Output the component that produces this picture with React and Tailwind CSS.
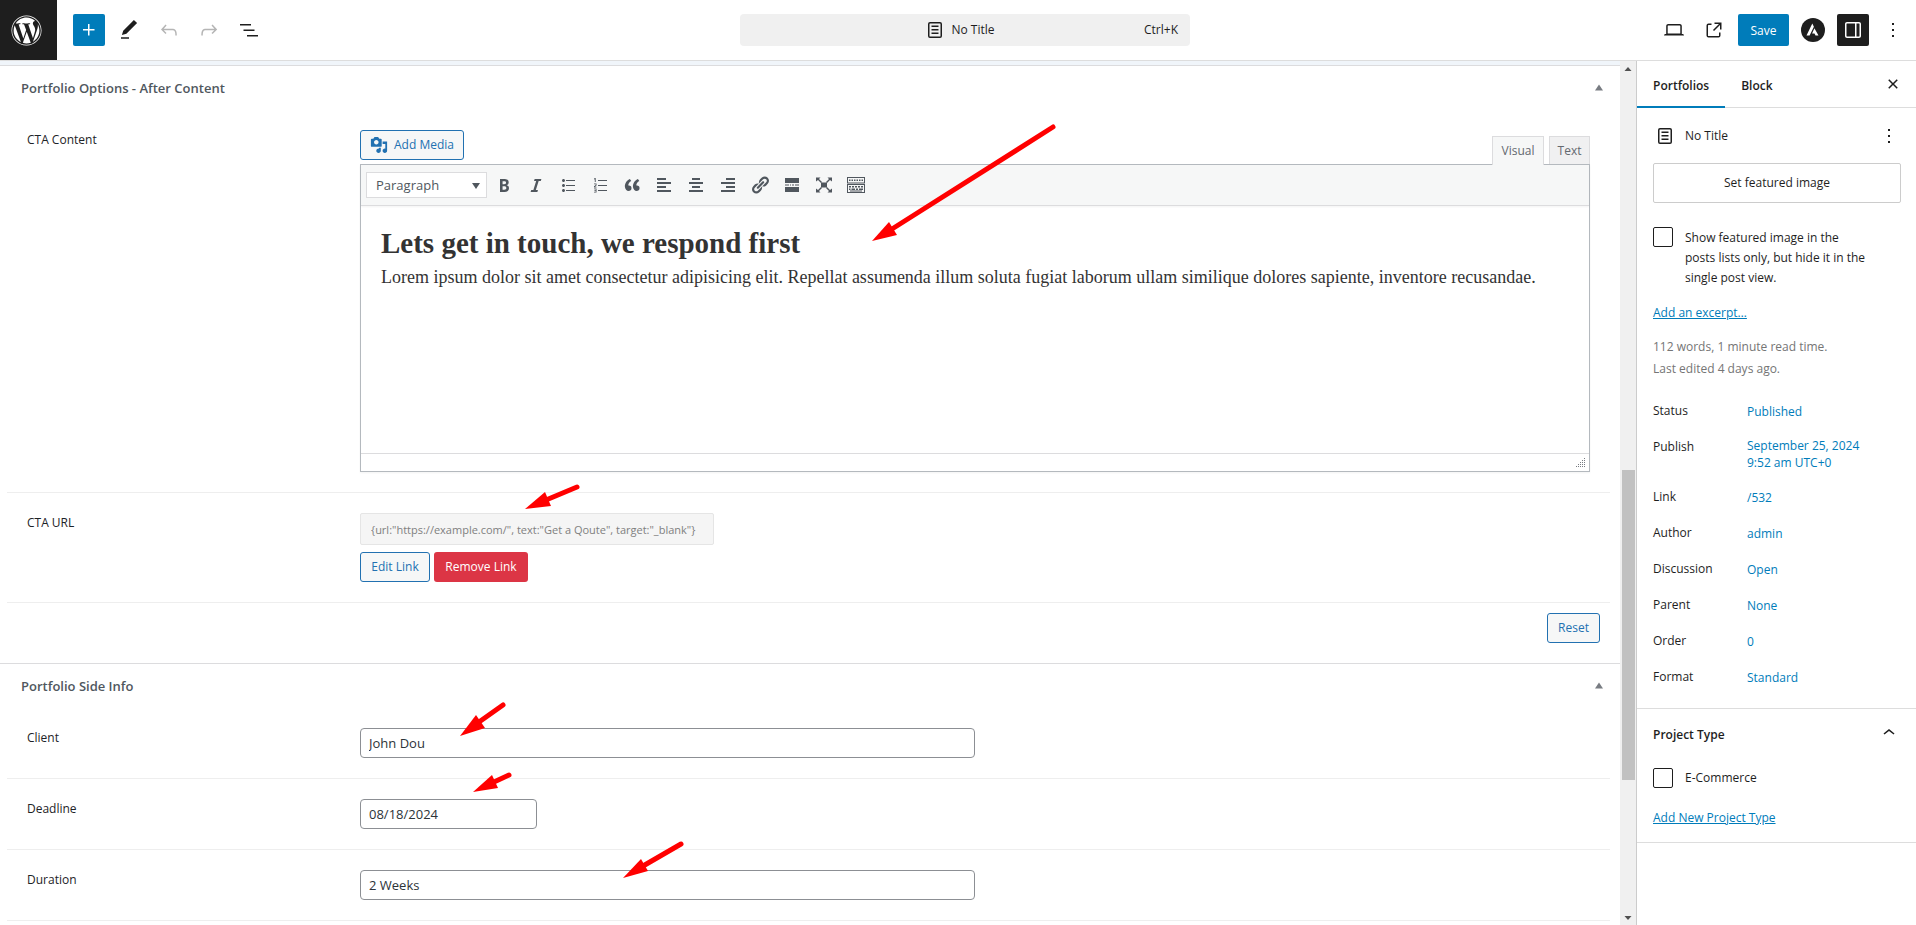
import React from "react";
import { FaWordpress } from "react-icons/fa";

function Glyph({ d, size = "size-6", box = "0 0 24 24", className = "" }) {
  return (
    <svg viewBox={box} className={`${size} shrink-0 ${className}`} fill="currentColor" aria-hidden="true">
      <path d={d} fillRule="evenodd" />
    </svg>
  );
}

const WP = {
  plus: "M11 12.5V17.5H12.5V12.5H17.5V11H12.5V6H11V11H6V12.5H11Z",
  edit: "M20.1 5.1L16.9 2 6.2 12.7l-1.3 4.4 4.5-1.3L20.1 5.1zM4 20.8h8v-1.5H4v1.5z",
  undo: "M18.3 11.7c-.6-.6-1.4-.9-2.3-.9H6.7l2.9-3.3-1.1-1-4.5 5L8.5 16l1-1-2.7-2.7H16c.5 0 .9.2 1.3.5 1 1 1 3.4 1 4.5v.3h1.5v-.2c0-1.5 0-4.3-1.5-5.7z",
  redo: "M15.6 6.5l-1.1 1 2.9 3.3H8c-.9 0-1.7.3-2.3.9-1.4 1.5-1.4 4.2-1.4 5.6v.2h1.5v-.3c0-1.1 0-3.5 1-4.5.3-.3.7-.5 1.3-.5h9.2L14.5 15l1.1 1.1 4.6-4.6-4.6-5z",
  list: "M3 6h11v1.5H3V6Zm3.5 5.5h11V13h-11v-1.5ZM21 17H10v1.5h11V17Z",
  page: "M15.5 7.5h-7V9h7V7.5Zm-7 3.5h7v1.5h-7V11Zm7 3.5h-7V16h7v-1.5ZM17 4H7a2 2 0 0 0-2 2v12a2 2 0 0 0 2 2h10a2 2 0 0 0 2-2V6a2 2 0 0 0-2-2ZM7 5.5h10a.5.5 0 0 1 .5.5v12a.5.5 0 0 1-.5.5H7a.5.5 0 0 1-.5-.5V6a.5.5 0 0 1 .5-.5Z",
  laptop: "M20.5 16h-.7V8c0-1.1-.9-2-2-2H6.2c-1.1 0-2 .9-2 2v8h-.7c-.8 0-1.5.7-1.5 1.5h20c0-.8-.7-1.5-1.5-1.5zM5.7 8c0-.3.2-.5.5-.5h11.6c.3 0 .5.2.5.5v7.6H5.7V8z",
  external: "M19.5 4.5h-7V6h4.44l-5.97 5.97 1.06 1.06L18 7.06v4.44h1.5v-7Zm-13 1a2 2 0 0 0-2 2v10a2 2 0 0 0 2 2h10a2 2 0 0 0 2-2v-3H17v3a.5.5 0 0 1-.5.5h-10a.5.5 0 0 1-.5-.5v-10a.5.5 0 0 1 .5-.5h3V5.5h-3Z",
  drawer: "M18 4H6c-1.1 0-2 .9-2 2v12c0 1.1.9 2 2 2h12c1.1 0 2-.9 2-2V6c0-1.1-.9-2-2-2zm-4 14.5H6c-.3 0-.5-.2-.5-.5V6c0-.3.2-.5.5-.5h8v13zm4.5-.5c0 .3-.2.5-.5.5h-2.5v-13H18c.3 0 .5.2.5.5v12z",
  more: "M13 19h-2v-2h2v2zm0-6h-2v-2h2v2zm0-6h-2V5h2v2z",
  close: "M12 13.06l3.712 3.713 1.061-1.06L13.061 12l3.712-3.712-1.06-1.06L12 10.938 8.288 7.227l-1.061 1.06L10.939 12l-3.712 3.712 1.06 1.061L12 13.061z",
  up: "M6.5 12.4L12 8l5.5 4.4-.9 1.2L12 10l-4.5 3.6-1-1.2z",
};

const TOOLS = [
  ["Bold", "M6 4v13h4.54c1.37 0 2.46-.33 3.26-1 .8-.66 1.2-1.58 1.2-2.77 0-.84-.17-1.51-.51-2.01s-.9-.85-1.67-1.03v-.09c.57-.1 1.02-.4 1.36-.9s.51-1.13.51-1.91c0-1.14-.39-1.98-1.17-2.5C12.75 4.26 11.5 4 9.78 4H6zm2.57 5.15V6.26h1.36c.73 0 1.27.11 1.61.32.34.22.51.58.51 1.07 0 .54-.16.92-.47 1.15s-.82.35-1.51.35h-1.5zm0 2.19h1.6c1.44 0 2.16.53 2.16 1.61 0 .6-.17 1.05-.51 1.34s-.86.43-1.57.43H8.57v-3.38z"],
  ["Italic", "M14.78 6h-2.13l-2.8 9h2.12l-.62 2H4.6l.62-2h2.14l2.8-9H8.03l.62-2h6.75z"],
  ["Bulleted list", "M5.5 7C4.67 7 4 6.33 4 5.5 4 4.68 4.67 4 5.5 4 6.32 4 7 4.68 7 5.5 7 6.33 6.32 7 5.5 7zM8 5h9v1H8V5zm-2.5 7c-.83 0-1.5-.67-1.5-1.5C4 9.68 4.67 9 5.5 9c.82 0 1.5.68 1.5 1.5 0 .83-.68 1.5-1.5 1.5zM8 10h9v1H8v-1zm-2.5 7c-.83 0-1.5-.67-1.5-1.5 0-.82.67-1.5 1.5-1.5.82 0 1.5.68 1.5 1.5 0 .83-.68 1.5-1.5 1.5zM8 15h9v1H8v-1z"],
  ["Numbered list", "M8 5h9v1H8zM8 10h9v1H8zM8 15h9v1H8zM4.8 3h.9v4h-.9V4.200l-.8.3v-.8zM4 8.500h2.500v2L5 11.700h1.500v.8H4v-1.200l1.700-1.300v-.7H4zM4 13.500h2.500v4H4v-.8h1.700v-.9H4.400v-.7h1.300v-.8H4z"],
  ["Blockquote", "M9.49 13.22c0-.74-.2-1.38-.61-1.9-.62-.78-1.83-.88-2.53-.72-.29-1.65 1.11-3.75 2.92-4.65L7.88 4c-2.73 1.3-5.42 4.28-4.96 8.05C3.21 14.43 4.59 16 6.54 16c.85 0 1.56-.25 2.12-.75s.83-1.18.83-2.03zm8.05 0c0-.74-.2-1.38-.61-1.9-.63-.78-1.83-.88-2.53-.72-.29-1.65 1.11-3.75 2.92-4.65L15.93 4c-2.73 1.3-5.41 4.28-4.95 8.05.29 2.38 1.66 3.95 3.61 3.95.85 0 1.56-.25 2.12-.75s.83-1.18.83-2.03z"],
  ["Align left", "M12 5V3H3v2h9zm5 4V7H3v2h14zm-5 4v-2H3v2h9zm5 4v-2H3v2h14z"],
  ["Align center", "M14 5V3H6v2h8zm3 4V7H3v2h14zm-3 4v-2H6v2h8zm3 4v-2H3v2h14z"],
  ["Align right", "M17 5V3H8v2h9zm0 4V7H3v2h14zm0 4v-2H8v2h9zm0 4v-2H3v2h14z"],
  ["Insert link", "M17.74 2.76c1.68 1.69 1.68 4.41 0 6.1l-1.53 1.52c-1.12 1.12-2.7 1.47-4.14 1.09l2.62-2.61.76-.77.76-.76c.84-.84.84-2.2 0-3.04-.84-.85-2.2-.85-3.04 0l-.77.76-3.38 3.38c-.37-1.44-.02-3.02 1.1-4.14l1.52-1.53c1.69-1.68 4.42-1.68 6.1 0zM8.59 13.43l5.34-5.34c.42-.42.42-1.1 0-1.52-.44-.43-1.13-.39-1.53 0l-5.33 5.34c-.42.42-.42 1.1 0 1.52.44.43 1.13.39 1.52 0zm-.76 2.29l4.14-4.15c.38 1.44.03 3.02-1.09 4.14l-1.52 1.53c-1.69 1.68-4.41 1.68-6.1 0-1.68-1.68-1.68-4.42 0-6.1l1.53-1.52c1.12-1.12 2.7-1.47 4.14-1.1l-4.14 4.15c-.85.84-.85 2.2 0 3.05.84.84 2.2.84 3.04 0z"],
  ["Read more tag", "M3 3h14v5H3zM3 9.500h4v1H3zM8 9.500h1v1H8zM10 9.500h2v1h-2zM13 9.500h4v1h-4zM3 12h14v5H3z"],
  ["Fullscreen", "M7 7.500h6v5H7zM2 2.500h4.500L5 4l3 3-1 1-3-3-2 1.500zM18 2.500h-4.500L15 4l-3 3 1 1 3-3 2 1.500zM2 17.500h4.500L5 16l3-3-1-1-3 3-2-1.500zM18 17.500h-4.500L15 16l-3-3 1-1 3 3 2-1.500z"],
  ["Toolbar toggle", "M1 2h18v6.500H1zM2 3v4.500h16V3zM3 4.500h1.500V6H3zM5.500 4.500H7V6H5.500zM8 4.500h1.500V6H8zM10.500 4.500H12V6h-1.500zM13 4.500h1.500V6H13zM15.500 4.500H17V6h-1.500zM1 9h18v9H1zM2 10v7h16v-7zM3 11h2v1.500H3zM6 11h2v1.500H6zM9 11h2v1.500H9zM12 11h2v1.500h-2zM15 11h2v1.500h-2zM3 13.500h1.500V15H3zM5.500 13.500H9V15H5.500zM10 13.500h2V15h-2zM13 13.500h4V15h-4zM4 15.600h12v.8H4z"],
];

const SUMMARY = [
  ["Status", "Published"],
  ["Publish", "September 25, 2024 9:52 am UTC+0"],
  ["Link", "/532"],
  ["Author", "admin"],
  ["Discussion", "Open"],
  ["Parent", "None"],
  ["Order", "0"],
  ["Format", "Standard"],
];

function IconButton({ label, icon, className = "text-[#1e1e1e]" }) {
  return (
    <button type="button" aria-label={label} className={`flex size-8 items-center justify-center rounded-xs ${className}`}>
      <Glyph d={icon} />
    </button>
  );
}

function Header() {
  return (
    <header className="grid shrink-0 grid-cols-[calc(50%-218px)_450px_1fr] items-center border-b border-[#ddd] bg-white">
      <div className="flex items-center gap-2">
        <a href="#dashboard" aria-label="View Portfolios" className="mr-2 flex h-15 w-[57px] items-center justify-center bg-[#1e1e1e] pr-1 text-white">
          <FaWordpress className="size-[31px]" />
        </a>
        <IconButton label="Toggle block inserter" icon={WP.plus} className="bg-[#007cba] text-white" />
        <IconButton label="Tools" icon={WP.edit} />
        <IconButton label="Undo" icon={WP.undo} className="text-[#b5b5b5]" />
        <IconButton label="Redo" icon={WP.redo} className="text-[#b5b5b5]" />
        <IconButton label="Document overview" icon={WP.list} />
      </div>
      <button type="button" className="grid h-8 grid-cols-[1fr_auto_1fr] items-center rounded-sm bg-[#f0f0f0] pr-3 text-[#1e1e1e]">
        <span />
        <span className="flex items-center gap-1">
          <Glyph d={WP.page} />
          No Title
        </span>
        <span className="text-right">Ctrl+K</span>
      </button>
      <div className="flex items-center justify-end gap-2 pr-[7px]">
        <IconButton label="View" icon={WP.laptop} />
        <IconButton label="View Portfolio" icon={WP.external} />
        <button type="button" className="h-8 w-[51px] rounded-xs bg-[#007cba] pt-[2px] text-white">Save</button>
        <button type="button" aria-label="Astra settings" className="flex size-8 items-center justify-center">
          <svg viewBox="0 0 24 24" className="size-6" aria-hidden="true">
            <circle cx="12" cy="12" r="12" fill="#1e1e1e" />
            <path d="M11.300 5.500l1.600 3.200-4.300 8.800H5.500zM13.400 10.300l4.100 7.200h-3l-1-1.900h-2.400z" fill="#fff" />
          </svg>
        </button>
        <IconButton label="Settings" icon={WP.drawer} className="bg-[#1e1e1e] text-white" />
        <IconButton label="Options" icon={WP.more} />
      </div>
    </header>
  );
}

function MetaBox({ title, children }) {
  return (
    <section className="border-t border-[#dcdcde] bg-white">
      <div className="flex h-11 items-center justify-between pr-[15px] pl-[21px]">
        <h2 className="text-[13px] font-semibold text-[#50575e]">{title}</h2>
        <button type="button" aria-label={`Toggle panel: ${title}`} className="text-[#787c82]">
          <svg viewBox="0 0 12 12" className="size-3" aria-hidden="true">
            <path d="M2 8.500L6 2.500l4 6z" fill="currentColor" />
          </svg>
        </button>
      </div>
      {children}
    </section>
  );
}

function Row({ label, htmlFor, children }) {
  return (
    <div className="mr-[10px] ml-[7px] flex border-b border-[#eee] p-5">
      <div className="w-[333px] shrink-0 text-[#1d2327]">
        <label htmlFor={htmlFor} id={`${htmlFor}-label`} className="block leading-5 font-medium">{label}</label>
      </div>
      <div className="min-w-0 flex-1">{children}</div>
    </div>
  );
}

function TextField({ id, value, width }) {
  return (
    <input
      id={id}
      type="text"
      defaultValue={value}
      className={`block h-[30px] rounded-sm border border-[#8c8f94] bg-white px-2 text-[13px] text-[#2c3338] ${width}`}
    />
  );
}

const OUTLINE = "h-[30px] rounded-[3px] border border-[#2271b1] bg-[#f6f7f7] text-[#2271b1]";

function Editor() {
  return (
    <div>
      <div className="flex items-start justify-between">
        <button type="button" className={`${OUTLINE} flex w-[104px] items-center justify-center gap-[6px]`}>
          <svg viewBox="0 0 20 20" className="size-[18px]" fill="currentColor" aria-hidden="true">
            <path fillRule="evenodd" d="M13 11V4c0-.550-.450-1-1-1h-1.670L9 1H5L3.670 3H2c-.550 0-1 .450-1 1v7c0 .550.450 1 1 1h10c.550 0 1-.450 1-1zM7 4.500c1.380 0 2.500 1.120 2.500 2.500S8.380 9.500 7 9.500 4.500 8.380 4.500 7 5.620 4.500 7 4.500zM14 6h5v10.500c0 1.380-1.120 2.500-2.500 2.500S14 17.880 14 16.500s1.120-2.500 2.500-2.500c.170 0 .340.020.500.050V9h-3V6zm-4 8.050V13h2v3.500c0 1.380-1.120 2.500-2.500 2.500S7 17.880 7 16.500 8.120 14 9.500 14c.170 0 .340.020.500.050z" />
          </svg>
          Add Media
        </button>
        <div className="mt-[6px] flex gap-[5px]" role="tablist">
          <button type="button" role="tab" aria-selected="true" className="relative z-10 -mb-px h-[29px] w-[52px] border border-b-0 border-[#dcdcde] bg-[#f6f7f7] text-[#646970]">
            Visual
          </button>
          <button type="button" role="tab" aria-selected="false" className="h-7 w-[41px] border border-b-0 border-[#dcdcde] bg-[#f0f0f1] text-[#646970]">
            Text
          </button>
        </div>
      </div>
      <div className="border border-[#b4b9be] bg-white shadow-xs">
        <div className="flex h-[41px] items-center gap-[5px] border-b border-[#dcdcde] bg-[#f6f7f7] pl-[5px] shadow-xs">
          <div className="relative">
            <select aria-label="Text format" defaultValue="Paragraph" className="block h-[26px] w-[121px] appearance-none border border-[#dcdcde] bg-white pl-[9px] text-[13px] text-[#50575e]">
              <option>Paragraph</option>
              <option>Heading 1</option>
              <option>Heading 2</option>
            </select>
            <svg viewBox="0 0 8 8" className="pointer-events-none absolute top-[10px] right-[7px] size-2" aria-hidden="true">
              <path d="M0 1h8L4 7z" fill="#50575e" />
            </svg>
          </div>
          <div className="flex gap-2">
            {TOOLS.map(([name, d]) => (
              <button key={name} type="button" aria-label={name} className="flex size-6 items-center justify-center text-[#50575e]">
                <Glyph d={d} size="size-5" box="0 0 20 20" />
              </button>
            ))}
          </div>
        </div>
        <div
          contentEditable
          suppressContentEditableWarning
          role="textbox"
          aria-multiline="true"
          aria-labelledby="cta-content-label"
          className="h-[247px] px-5 pt-5 font-['Georgia','Liberation_Serif',serif] text-[#333]"
        >
          <h2 className="text-[29px] leading-[34px] font-bold">Lets get in touch, we respond first</h2>
          <p className="mt-[5px] text-[18px] leading-6">
            Lorem ipsum dolor sit amet consectetur adipisicing elit. Repellat assumenda illum soluta fugiat laborum ullam similique dolores sapiente, inventore recusandae.
          </p>
        </div>
        <div className="flex h-[18px] items-end justify-end border-t border-[#dcdcde] p-[3px]">
          <svg viewBox="0 0 10 10" className="size-[10px]" fill="#787c82" aria-hidden="true">
            <path d="M8 0h1v1H8zM6 2h1v1H6zM8 2h1v1H8zM4 4h1v1H4zM6 4h1v1H6zM8 4h1v1H8zM2 6h1v1H2zM4 6h1v1H4zM6 6h1v1H6zM8 6h1v1H8zM0 8h1v1H0zM2 8h1v1H2zM4 8h1v1H4zM6 8h1v1H6zM8 8h1v1H8z" />
          </svg>
        </div>
      </div>
    </div>
  );
}

function Content() {
  return (
    <main className="min-w-0 flex-1 overflow-hidden bg-white">
      <div className="h-1 bg-[#f0f5fa]" />
      <MetaBox title="Portfolio Options - After Content">
        <Row label="CTA Content" htmlFor="cta-content">
          <Editor />
        </Row>
        <Row label="CTA URL" htmlFor="cta-url">
          <input
            id="cta-url"
            readOnly
            defaultValue={'{url:"https://example.com/", text:"Get a Qoute", target:"_blank"}'}
            className="block h-8 w-[354px] rounded-xs border border-[#e5e5e5] bg-[#f5f5f5] px-[10px] text-[11px] text-[#808080]"
          />
          <div className="mt-[7px] flex gap-1">
            <button type="button" className={`${OUTLINE} w-[70px]`}>Edit Link</button>
            <button type="button" className="h-[30px] w-[94px] rounded-[3px] bg-[#dc3545] text-white">Remove Link</button>
          </div>
        </Row>
        <div className="flex justify-end pt-[10px] pr-5 pb-5">
          <button type="button" className={`${OUTLINE} w-[53px]`}>Reset</button>
        </div>
      </MetaBox>
      <MetaBox title="Portfolio Side Info">
        <Row label="Client" htmlFor="client">
          <TextField id="client" value="John Dou" width="w-1/2" />
        </Row>
        <Row label="Deadline" htmlFor="deadline">
          <TextField id="deadline" value="08/18/2024" width="w-[177px]" />
        </Row>
        <Row label="Duration" htmlFor="duration">
          <TextField id="duration" value="2 Weeks" width="w-1/2" />
        </Row>
      </MetaBox>
    </main>
  );
}

function ScrollTrack() {
  return (
    <div className="flex w-4 shrink-0 flex-col items-center bg-[#f0f0f0] text-[#505050]" aria-hidden="true">
      <svg viewBox="0 0 16 16" className="size-4"><path d="M4.500 10h7L8 6z" fill="currentColor" /></svg>
      <div className="flex-[393]" />
      <div className="w-[13px] flex-[310] bg-[#c1c1c1]" />
      <div className="flex-[129]" />
      <svg viewBox="0 0 16 16" className="size-4"><path d="M4.500 7h7L8 11z" fill="currentColor" /></svg>
    </div>
  );
}

const BOX = "size-5 shrink-0 appearance-none rounded-xs border border-[#1e1e1e] bg-white";

function Sidebar() {
  return (
    <aside className="flex w-[280px] shrink-0 flex-col border-l border-[#ccc] bg-white text-[#1e1e1e]">
      <div className="flex h-[47px] items-stretch border-b border-[#ddd] pr-[7px] font-semibold" role="tablist">
        <button type="button" role="tab" aria-selected="true" className="-mb-px border-b-2 border-[#007cba] px-4 pt-1">Portfolios</button>
        <button type="button" role="tab" aria-selected="false" className="px-4 pt-[3px]">Block</button>
        <button type="button" aria-label="Close Settings" className="ml-auto flex w-8 items-center justify-center">
          <Glyph d={WP.close} />
        </button>
      </div>
      <div className="border-b border-[#ddd] pt-3 pr-[15px] pb-[15px] pl-4">
        <div className="flex h-8 items-center gap-2">
          <Glyph d={WP.page} />
          <span className="flex-1 font-medium">No Title</span>
          <button type="button" aria-label="Actions" className="flex w-6 items-center justify-center">
            <Glyph d={WP.more} />
          </button>
        </div>
        <button type="button" className="mt-[11px] h-10 w-full rounded-xs border border-[#ccc]">Set featured image</button>
        <div className="mt-6 flex gap-3">
          <input id="hide-image" type="checkbox" className={BOX} />
          <label htmlFor="hide-image" className="max-w-[186px] pt-px leading-5">
            Show featured image in the posts lists only, but hide it in the single post view.
          </label>
        </div>
        <p className="mt-[15px] leading-5"><a href="#excerpt" className="text-[#007cba] underline">Add an excerpt…</a></p>
        <p className="mt-[13px] leading-[22px] text-[#757575]">112 words, 1 minute read time.<br />Last edited 4 days ago.</p>
        <dl className="mt-[15px] flex flex-col gap-1">
          {SUMMARY.map(([name, value]) => (
            <div key={name} className="flex items-start">
              <dt className="w-[94px] shrink-0 py-[6px] leading-5">{name}</dt>
              <dd className="flex min-h-8 min-w-0 flex-1 items-center py-[6px] leading-[17px] text-[#007cba]">
                <button type="button" className="block max-w-32 text-left">{value}</button>
              </dd>
            </div>
          ))}
        </dl>
      </div>
      <div className="border-b border-[#ddd] pr-[15px] pb-[14px] pl-4">
        <div className="flex h-[52px] items-center justify-between font-semibold">
          <h2>Project Type</h2>
          <button type="button" aria-label="Toggle Project Type" className="pb-1"><Glyph d={WP.up} /></button>
        </div>
        <div className="mt-[7px] flex items-center gap-3">
          <input id="ecommerce" type="checkbox" className={BOX} />
          <label htmlFor="ecommerce" className="leading-5">E-Commerce</label>
        </div>
        <p className="mt-5 leading-5"><a href="#new-type" className="text-[#007cba] underline">Add New Project Type</a></p>
      </div>
    </aside>
  );
}

function Annotations() {
  return (
    <svg className="pointer-events-none absolute top-0 left-0 h-[925px] w-[1000px] overflow-visible" viewBox="0 0 1000 925" aria-hidden="true">
      <g stroke="#f00" strokeWidth="5" strokeLinecap="round">
        <path d="M1053 127L892 229" />
        <path d="M577 487L546 500" />
        <path d="M503 705L479 722" />
        <path d="M509 775L494 782" />
        <path d="M681 844L643 866" />
      </g>
      <g fill="#f00">
        <path d="M872 241l17-19 8 13z" />
        <path d="M525 509l20-17 6 14z" />
        <path d="M460 736l16-21 9 13z" />
        <path d="M473 792l19-17 6 13z" />
        <path d="M623 878l18-19 7 12z" />
      </g>
    </svg>
  );
}

export default function App() {
  return (
    <div className="relative flex h-screen flex-col overflow-hidden bg-white font-['Segoe_UI','Open_Sans',sans-serif] text-[12px] leading-[18px]">
      <Header />
      <div className="flex min-h-0 flex-1">
        <Content />
        <ScrollTrack />
        <Sidebar />
      </div>
      <Annotations />
    </div>
  );
}
